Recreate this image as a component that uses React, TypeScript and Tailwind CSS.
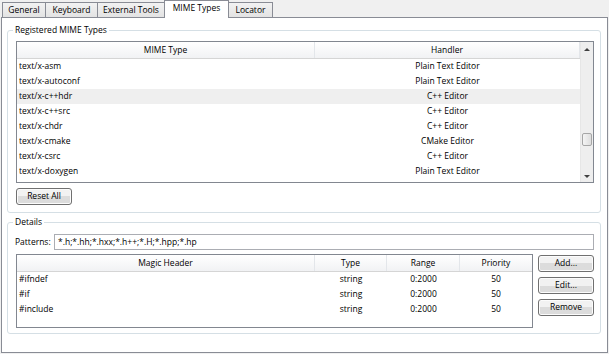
import React from "react"

const tabs = [
  { label: "General", w: "w-[44px]" },
  { label: "Keyboard", w: "w-[53px]" },
  { label: "External Tools", w: "w-[68px]" },
  { label: "MIME Types", w: "w-[65px]", active: true },
  { label: "Locator", w: "w-[45px]" },
]

const mimeRows = [
  { type: "text/x-asm", handler: "Plain Text Editor" },
  { type: "text/x-autoconf", handler: "Plain Text Editor" },
  { type: "text/x-c++hdr", handler: "C++ Editor", hover: true },
  { type: "text/x-c++src", handler: "C++ Editor" },
  { type: "text/x-chdr", handler: "C++ Editor" },
  { type: "text/x-cmake", handler: "CMake Editor" },
  { type: "text/x-csrc", handler: "C++ Editor" },
  { type: "text/x-doxygen", handler: "Plain Text Editor" },
]

const magicRows = [
  { header: "#ifndef", type: "string", range: "0:2000", priority: "50" },
  { header: "#if", type: "string", range: "0:2000", priority: "50" },
  { header: "#include", type: "string", range: "0:2000", priority: "50" },
]

function WinButton({ label, className }: { label: string; className?: string }) {
  return (
    <button
      className={`h-[17px] rounded-[3px] border border-[#707070] bg-gradient-to-b from-[#f2f2f2] from-50% to-[#dcdcdc] to-50% text-[8.5px] leading-none text-black shadow-[inset_0_0_0_1px_#fcfcfc] ${className ?? ""}`}
    >
      {label}
    </button>
  )
}

function GroupBox({ title, className, children }: { title: string; className?: string; children: React.ReactNode }) {
  return (
    <div className={`relative ml-[5px] w-[594px] rounded-[3px] border border-[#d5dfe5] ${className ?? ""}`}>
      <span className="absolute left-[5px] top-[-7px] bg-white px-[2px] leading-[12px]">{title}</span>
      {children}
    </div>
  )
}

function HeaderCell({ label, className }: { label: string; className?: string }) {
  return (
    <div className={`flex items-center justify-center border-r border-[#e3e6ea] ${className ?? ""}`}>
      {label}
    </div>
  )
}

function Scrollbar() {
  return (
    <div className="flex w-[13px] flex-col border-l border-[#e6e6e6] bg-[#eeeeee]">
      <div className="flex h-[14px] items-center justify-center">
        <div className="h-0 w-0 border-x-[3px] border-b-[3px] border-x-transparent border-b-[#404040]" />
      </div>
      <div className="flex-1 px-[1px] pt-[77px]">
        <div className="h-[13px] rounded-[2px] border border-[#a6a6a6] bg-gradient-to-r from-[#f4f4f4] to-[#dedede]" />
      </div>
      <div className="flex h-[12px] items-center justify-center">
        <div className="h-0 w-0 border-x-[3px] border-t-[3px] border-x-transparent border-t-[#404040]" />
      </div>
    </div>
  )
}

export default function App() {
  return (
    <div className="h-[354px] w-[609px] overflow-hidden bg-[#f0f0f0] font-['Open_Sans',Arial,sans-serif] text-[8.5px] text-black">
      {/* tab strip */}
      <div className="flex h-[17px] items-end pl-[2px]">
        {tabs.map((t) =>
          t.active ? (
            <div
              key={t.label}
              className={`relative z-10 -mb-px -ml-px flex h-[18px] items-center justify-center border-x border-t border-[#898c95] bg-white pb-[2px] ${t.w}`}
            >
              {t.label}
            </div>
          ) : (
            <div
              key={t.label}
              className={`-ml-px flex h-[15px] items-center justify-center border-x border-t border-[#898c95] bg-gradient-to-b from-[#f2f2f2] to-[#e3e3e3] first:ml-0 ${t.w}`}
            >
              {t.label}
            </div>
          )
        )}
      </div>

      {/* pane */}
      <div className="ml-[1px] h-[336px] w-[607px] border border-[#898c95] bg-white">
        <GroupBox title="Registered MIME Types" className="mt-[12px] h-[183px] pl-[8px] pt-[10px]">
          <div className="flex h-[142px] w-[578px] border border-[#828790]">
            <div className="flex w-[563px] flex-col">
              <div className="flex h-[17px] border-b border-[#d5d5d5] bg-gradient-to-b from-white to-[#f1f2f4]">
                <HeaderCell label="MIME Type" className="w-[298px]" />
                <HeaderCell label="Handler" className="w-[265px]" />
              </div>
              {mimeRows.map((r) => (
                <div key={r.type} className={`flex h-[15px] items-center ${r.hover ? "bg-[#efefef]" : ""}`}>
                  <div className="w-[298px] pl-[2px]">{r.type}</div>
                  <div className="w-[265px] text-center">{r.handler}</div>
                </div>
              ))}
            </div>
            <Scrollbar />
          </div>
          <WinButton label="Reset All" className="mt-[5px] w-[56px]" />
        </GroupBox>

        <GroupBox title="Details" className="mt-[9px] h-[112px] pl-[7px] pt-[11px]">
          <div className="flex h-[16px] items-center">
            <span className="w-[39px]">Patterns:</span>
            <div className="flex h-[16px] w-[540px] items-center border border-[#abadb3] pl-[3px]">
              *.h;*.hh;*.hxx;*.h++;*.H;*.hpp;*.hp
            </div>
          </div>
          <div className="ml-[1px] mt-[4px] flex">
            <div className="flex h-[74px] w-[517px] flex-col border border-[#828790]">
              <div className="flex h-[17px] border-b border-[#d5d5d5] bg-gradient-to-b from-white to-[#f1f2f4]">
                <HeaderCell label="Magic Header" className="w-[298px]" />
                <HeaderCell label="Type" className="w-[72px]" />
                <HeaderCell label="Range" className="w-[73px]" />
                <HeaderCell label="Priority" className="w-[72px] border-r-0" />
              </div>
              {magicRows.map((r) => (
                <div key={r.header} className="flex h-[15px] items-center">
                  <div className="w-[298px] pl-[2px]">{r.header}</div>
                  <div className="w-[72px] text-center">{r.type}</div>
                  <div className="w-[73px] text-center">{r.range}</div>
                  <div className="w-[72px] text-center">{r.priority}</div>
                </div>
              ))}
            </div>
            <div className="ml-[5px] mt-[1px] flex flex-col gap-[5px]">
              <WinButton label="Add..." className="w-[56px]" />
              <WinButton label="Edit..." className="w-[56px]" />
              <WinButton label="Remove" className="w-[56px]" />
            </div>
          </div>
        </GroupBox>
      </div>
    </div>
  )
}
